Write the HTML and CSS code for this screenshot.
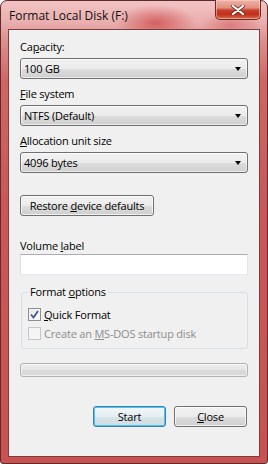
FILE: index.html
```html
<!DOCTYPE html>
<html>
<head>
<meta charset="utf-8">
<link rel="stylesheet" href="styles.css">
</head>
<body>
<div class="window">
  <div class="titlebar">
    <span class="title">Format Local Disk (F:)</span>
    <div class="close-btn">
      <svg width="14" height="10" viewBox="0 0 14 10"><path d="M2 1 L12 9 M12 1 L2 9" stroke="#6a2a20" stroke-width="3.6" stroke-linecap="round"/><path d="M2 1 L12 9 M12 1 L2 9" stroke="#ffffff" stroke-width="2.2" stroke-linecap="round"/></svg>
    </div>
  </div>
  <div class="client">
    <div class="label l1">Ca<u>p</u>acity:</div>
    <div class="combo"><span>100 GB</span><i class="arrow"></i></div>
    <div class="label l2"><u>F</u>ile system</div>
    <div class="combo"><span>NTFS (Default)</span><i class="arrow"></i></div>
    <div class="label l2"><u>A</u>llocation unit size</div>
    <div class="combo"><span>4096 bytes</span><i class="arrow"></i></div>
    <div class="button restore"><span>Restore <u>d</u>evice defaults</span></div>
    <div class="label l4">Volume <u>l</u>abel</div>
    <div class="input"></div>
    <div class="group">
      <div class="legend">Format <u>o</u>ptions</div>
      <div class="check-row">
        <span class="checkbox checked"><svg width="9" height="9" viewBox="0 0 9 9"><path d="M1 4.5 L3.5 7.5 L8 1" stroke="#3f5b92" stroke-width="1.8" fill="none"/></svg></span>
        <span><u>Q</u>uick Format</span>
      </div>
      <div class="check-row disabled">
        <span class="checkbox"></span>
        <span>Create an <u>M</u>S-DOS startup disk</span>
      </div>
    </div>
    <div class="progress"></div>
    <div class="buttons">
      <div class="button start"><span>Start</span></div>
      <div class="button close"><span><u>C</u>lose</span></div>
    </div>
  </div>
</div>
</body>
</html>
```

FILE: styles.css
```css
* { box-sizing: border-box; }
html, body { margin: 0; padding: 0; background: #ffffff; }
body { font-family: "Open Sans", "Noto Sans", sans-serif; font-size: 11px; letter-spacing: -0.2px; color: #000; }

.window {
  width: 268px;
  height: 464px;
  border: 1px solid #5e2b2b;
  border-radius: 7px 7px 3px 3px;
  background:
    radial-gradient(ellipse 40px 18px at 155px 22px, rgba(205,70,70,0.75), rgba(205,70,70,0) 100%),
    radial-gradient(ellipse 30px 14px at 230px 24px, rgba(210,80,80,0.5), rgba(210,80,80,0) 100%),
    linear-gradient(to bottom, #f2c3c3 0px, #eab0b0 20px, #de8e8e 40px, #cf6666 80px, #ca5858 200px, #c85252 100%);
  display: flex;
  flex-direction: column;
  padding: 0 7px 6px 7px;
}

.titlebar {
  height: 28px;
  position: relative;
  flex: none;
}
.title {
  position: absolute;
  left: 1px;
  top: 7px;
  font-size: 12px;
  letter-spacing: 0;
  line-height: 16px;
  color: #111;
}
.close-btn {
  position: absolute;
  right: -1px;
  top: -1px;
  width: 46px;
  height: 20px;
  border: 1px solid #6b2a24;
  border-top: none;
  border-radius: 0 0 5px 5px;
  background: linear-gradient(to bottom, #eeb3a8 0%, #e29183 40%, #c8402a 55%, #c0301c 75%, #d86a4c 100%);
  box-shadow: inset 0 0 0 1px rgba(255,220,210,0.5);
  display: flex;
  align-items: center;
  justify-content: center;
}

.client {
  flex: 1;
  background: #f0f0f0;
  border: 1px solid #7c3c3c;
  padding: 0 11px 0 11px;
  display: flex;
  flex-direction: column;
}

.label { line-height: 14px; height: 14px; white-space: nowrap; }
.l1 { margin-top: 10px; }
.l2 { margin-top: 8px; }
.l4 { margin-top: 23px; }
u { text-decoration: underline; text-underline-offset: 1px; }

.combo {
  margin-top: 4px;
  height: 21px;
  border: 1px solid #707070;
  border-radius: 3px;
  background: linear-gradient(to bottom, #f2f2f2 0%, #ebebeb 50%, #dddddd 51%, #cfcfcf 100%);
  box-shadow: inset 0 0 0 1px rgba(255,255,255,0.6);
  display: flex;
  align-items: center;
  padding-left: 3px;
  position: relative;
}
.combo span { line-height: 14px; }
.arrow {
  position: absolute;
  right: 6px;
  top: 8px;
  width: 0; height: 0;
  border-left: 3.5px solid transparent;
  border-right: 3.5px solid transparent;
  border-top: 4px solid #000;
}

.button {
  height: 21px;
  border: 1px solid #707070;
  border-radius: 3px;
  background: linear-gradient(to bottom, #f2f2f2 0%, #ebebeb 50%, #dddddd 51%, #cfcfcf 100%);
  box-shadow: inset 0 0 0 1px rgba(255,255,255,0.7);
  display: flex;
  align-items: center;
  justify-content: center;
  line-height: 14px;
  white-space: nowrap;
}
.restore { margin-top: 22px; width: 134px; }

.input {
  margin-top: 1px;
  height: 21px;
  background: #fff;
  border: 1px solid #abadb3;
  border-color: #abadb3 #e2e3ea #e3e9ef #dbdfe6;
}

.group {
  margin-top: 17px;
  margin-left: 1px;
  height: 57px;
  border: 1px solid #d5dfe5;
  border-radius: 3px;
  position: relative;
  padding: 8px 0 0 6px;
}
.legend {
  position: absolute;
  left: 6px;
  top: -8px;
  padding: 0 2px;
  background: #f0f0f0;
  line-height: 14px;
}
.check-row {
  display: flex;
  align-items: center;
  height: 13px;
  margin-top: 7px;
  gap: 3px;
  line-height: 14px;
  white-space: nowrap;
}
.check-row + .check-row { margin-top: 6px; }
.checkbox {
  width: 13px; height: 13px;
  border: 1px solid #8e8f8f;
  background: linear-gradient(135deg, #e4e4e4, #ffffff);
  box-shadow: inset 0 0 0 1px #f4f4f4;
  display: flex; align-items: center; justify-content: center;
  flex: none;
}
.disabled { color: #8d8d8d; }
.disabled .checkbox { border-color: #c6c6c6; background: #f4f4f4; box-shadow: none; }

.progress {
  margin-top: 14px;
  height: 14px;
  border: 1px solid #b2b2b2;
  border-radius: 3px;
  background: linear-gradient(to bottom, #ececec 0%, #e6e6e6 50%, #dadada 51%, #d8d8d8 100%);
  box-shadow: inset 0 0 0 1px rgba(255,255,255,0.6);
}

.buttons {
  margin-top: 29px;
  display: flex;
  justify-content: flex-end;
  gap: 8px;
  padding-right: 1px;
}
.start, .close { width: 73px; }
.start {
  border-color: #3c7fb1;
  background: linear-gradient(to bottom, #f1f6f9 0%, #e7eef2 50%, #d9e3e8 51%, #d0dce2 100%);
  box-shadow: inset 0 0 0 1px #48c6f2;
}
```
